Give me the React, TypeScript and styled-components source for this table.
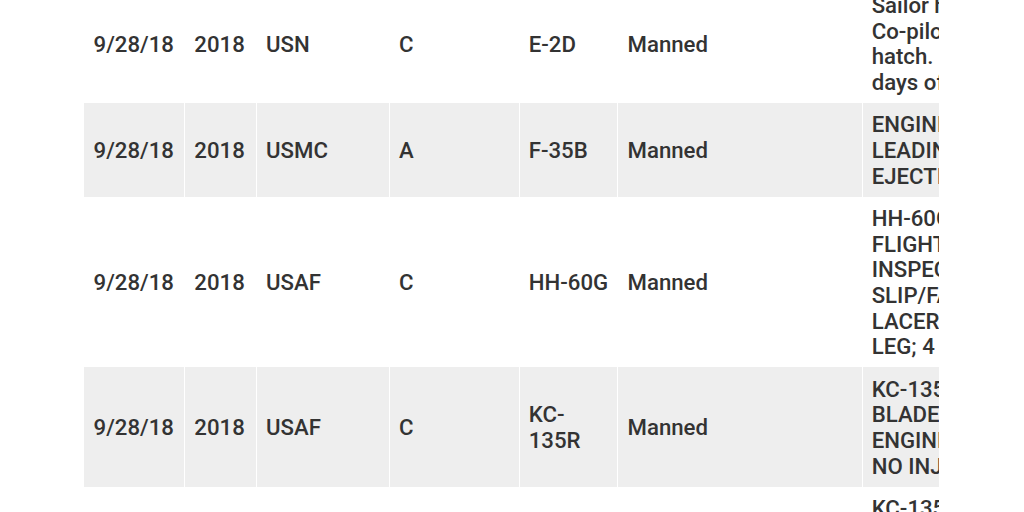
import React from "react";
import styled, { createGlobalStyle } from "styled-components";

const GlobalStyle = createGlobalStyle`
  html, body {
    margin: 0;
    padding: 0;
    background: #fff;
  }
  body {
    font-family: Roboto, "Noto Sans", Arial, sans-serif;
  }
`;

const Scroller = styled.div`
  margin: -16.4px 85px 0 83.4px;
  overflow: hidden;
  height: 540px;
`;

const Table = styled.table`
  table-layout: fixed;
  width: 1081px;
  border-collapse: separate;
  border-spacing: 1.6px 0;
  color: #333;
  font-size: 22.2px;
  line-height: 25.6px;
`;

const Row = styled.tr`
  &:nth-child(even) td {
    background: #eeeeee;
  }
`;

const Cell = styled.td`
  box-sizing: border-box;
  padding: 9.5px 9px 7.5px 9.2px;
  vertical-align: middle;
  text-align: left;
  font-weight: 500;
`;

const Narrative = styled(Cell)`
  white-space: nowrap;
  overflow: hidden;
`;

type Mishap = {
  date: string;
  year: string;
  service: string;
  mishapClass: string;
  aircraft: string;
  type: string;
  notes: string[];
};

const rows: Mishap[] = [
  {
    date: "9/28/18",
    year: "2018",
    service: "USN",
    mishapClass: "C",
    aircraft: "E-2D",
    type: "Manned",
    notes: [
      "Sailor hit head on",
      "Co-pilot escape",
      "hatch.  Sailor lost",
      "days of work.",
    ],
  },
  {
    date: "9/28/18",
    year: "2018",
    service: "USMC",
    mishapClass: "A",
    aircraft: "F-35B",
    type: "Manned",
    notes: ["ENGINE FOD DAMAGE", "LEADING TO PILOT", "EJECTION."],
  },
  {
    date: "9/28/18",
    year: "2018",
    service: "USAF",
    mishapClass: "C",
    aircraft: "HH-60G",
    type: "Manned",
    notes: [
      "HH-60G MAINTAINER",
      "FLIGHT LINE",
      "INSPECTION",
      "SLIP/FALL, RECEIVED",
      "LACERATION TO",
      "LEG; 4 DAYS LOST",
    ],
  },
  {
    date: "9/28/18",
    year: "2018",
    service: "USAF",
    mishapClass: "C",
    aircraft: "KC-135R",
    type: "Manned",
    notes: ["KC-135R FAN", "BLADE DAMAGE,", "ENGINE NO. 3,", "NO INJURIES"],
  },
  {
    date: "9/28/18",
    year: "2018",
    service: "USAF",
    mishapClass: "C",
    aircraft: "KC-135R",
    type: "Manned",
    notes: [
      "KC-135R PHYSIOLOGICAL",
      "EVENT DURING",
      "FLIGHT, CREW",
      "RECOVERED",
    ],
  },
];

const widths = [99.5, 70.5, 131.5, 128.5, 97.5, 242.5, 300];

export default function App() {
  return (
    <>
      <GlobalStyle />
      <Scroller>
        <Table>
          <colgroup>
            {widths.map((w, i) => (
              <col key={i} style={{ width: w }} />
            ))}
          </colgroup>
          <tbody>
            {rows.map((r, i) => (
              <Row key={i}>
                <Cell>{r.date}</Cell>
                <Cell>{r.year}</Cell>
                <Cell>{r.service}</Cell>
                <Cell>{r.mishapClass}</Cell>
                <Cell>{r.aircraft}</Cell>
                <Cell>{r.type}</Cell>
                <Narrative>
                  {r.notes.map((line, j) => (
                    <React.Fragment key={j}>
                      {j > 0 && <br />}
                      {line}
                    </React.Fragment>
                  ))}
                </Narrative>
              </Row>
            ))}
          </tbody>
        </Table>
      </Scroller>
    </>
  );
}
